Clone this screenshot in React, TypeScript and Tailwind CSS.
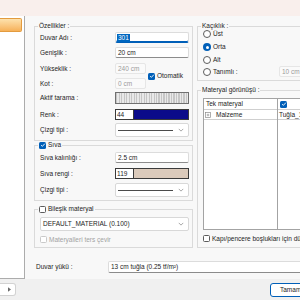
import React from 'react';

type BoxProps = { children?: React.ReactNode; className?: string };

const Check = ({ checked = false, disabled = false }: { checked?: boolean; disabled?: boolean }) =>
  checked ? (
    <span className="flex h-[7px] w-[7px] shrink-0 items-center justify-center rounded-[1.5px] bg-[#005fb8]">
      <svg viewBox="0 0 8 8" className="h-[6px] w-[6px]" fill="none" stroke="white" strokeWidth={1.2}>
        <path d="M1.5 4.2 3.2 5.8 6.5 2.2" />
      </svg>
    </span>
  ) : (
    <span
      className={`h-[7px] w-[7px] shrink-0 rounded-[1.5px] border bg-white ${
        disabled ? 'border-[#c9c9c9]' : 'border-[#5c5c5c]'
      }`}
    />
  );

const Radio = ({ checked = false }: { checked?: boolean }) =>
  checked ? (
    <span className="flex h-[8px] w-[8px] shrink-0 items-center justify-center rounded-full bg-[#005fb8]">
      <span className="h-[3px] w-[3px] rounded-full bg-white" />
    </span>
  ) : (
    <span className="h-[8px] w-[8px] shrink-0 rounded-full border border-[#5c5c5c] bg-white" />
  );

const Chevron = () => (
  <svg viewBox="0 0 8 5" className="h-[4px] w-[6px]" fill="none" stroke="#8a8a8a" strokeWidth={1}>
    <path d="M1 1l3 3 3-3" />
  </svg>
);

const TextBox = ({
  children,
  className = '',
  disabled = false,
  focused = false,
}: BoxProps & { disabled?: boolean; focused?: boolean }) => (
  <div
    className={`flex h-[11px] items-center overflow-hidden whitespace-nowrap rounded-[2px] border px-[2px] ${
      disabled
        ? 'border-[#e6e6e6] bg-[#fafafa] text-[#9b9b9b]'
        : focused
          ? 'border-[#dcdcdc] border-b-[#005fb8] bg-white shadow-[inset_0_-1px_0_#005fb8]'
          : 'border-[#dcdcdc] border-b-[#8c8c8c] bg-white'
    } ${className}`}
  >
    {children}
  </div>
);

const LineCombo = () => (
  <div className="flex h-[14px] flex-1 items-center rounded-[2px] border border-[#d8d8d8] bg-white pl-[2px] pr-[4px]">
    <span className="h-px w-[55px] bg-[#4a4a4a]" />
    <span className="ml-auto">
      <Chevron />
    </span>
  </div>
);

const ColorBox = ({ value, color }: { value: string; color: string }) => (
  <div className="flex h-[11px] flex-1 border border-[#3a3a3a] bg-white">
    <span className="flex w-[18px] items-center border-r border-[#3a3a3a] pl-[1px]">{value}</span>
    <span className="flex-1" style={{ background: color }} />
  </div>
);

const Row = ({ label, children, className = '' }: BoxProps & { label: string }) => (
  <div className={`flex items-center ${className}`}>
    <span className="w-[75px] shrink-0 whitespace-nowrap">{label}</span>
    {children}
  </div>
);

const PlusBox = () => (
  <svg viewBox="0 0 7 7" className="h-[6px] w-[6px]" fill="none" stroke="#8a8a8a" strokeWidth={0.8}>
    <rect x="0.5" y="0.5" width="6" height="6" />
    <path d="M2 3.5h3M3.5 2v3" />
  </svg>
);

export default function App() {
  return (
    <div className="flex h-[300px] w-[300px] flex-col overflow-hidden bg-[#f0f0f0] text-[6.5px] leading-[8px] text-[#1c1c1c] [font-family:'Liberation_Sans',Arial,sans-serif]">
      <div className="h-[16px] shrink-0 bg-[#f9efec]" />

      <div className="flex h-[263px] shrink-0">
        <aside className="w-[25px] shrink-0 border-b border-r border-[#acacac] bg-white pt-[2px]">
          <div className="h-[14px] w-[22px] rounded-r-[2px] border border-l-0 border-[#e39b3e] bg-linear-to-b from-[#fde2ad] to-[#f6b158]" />
        </aside>

        <main className="flex min-w-0 flex-1 flex-col overflow-hidden bg-[#f8f8f8] pl-[9px]">
          <div className="mt-[6px] flex gap-[4px]">
            {/* left column */}
            <div className="flex w-[159px] shrink-0 flex-col">
              <fieldset className="border border-[#dadada] pb-[3px] pl-[5px] pr-[3px] pt-[2px]">
                <legend className="ml-[-2px] px-[1px]">Özellikler :</legend>
                <Row label="Duvar Adı :">
                  <TextBox focused className="flex-1 pl-[1px]">
                    <span className="bg-[#0067c0] px-[1px] text-white">301</span>
                  </TextBox>
                </Row>
                <Row label="Genişlik :" className="mt-[4px]">
                  <TextBox className="flex-1">20 cm</TextBox>
                </Row>
                <div className="mt-[5px] flex items-center">
                  <div className="flex flex-col gap-[4px]">
                    <Row label="Yükseklik :">
                      <TextBox disabled className="w-[31px]">240 cm</TextBox>
                    </Row>
                    <Row label="Kot :">
                      <TextBox disabled className="w-[31px]">0 cm</TextBox>
                    </Row>
                  </div>
                  <span className="ml-[2px]">
                    <Check checked />
                  </span>
                  <span className="ml-[2px]">Otomatik</span>
                </div>
                <Row label="Aktif tarama :" className="mt-[3px]">
                  <div className="h-[12px] flex-1 border-[1.5px] border-[#707070] bg-[repeating-linear-gradient(90deg,#c6c6c6_0,#c6c6c6_1px,#e9e9e9_1px,#e9e9e9_2.5px)]" />
                </Row>
                <Row label="Renk :" className="mt-[5px]">
                  <ColorBox value="44" color="#0b0b8a" />
                </Row>
                <Row label="Çizgi tipi :" className="mt-[3px]">
                  <LineCombo />
                </Row>
              </fieldset>

              <fieldset className="border border-[#dadada] pb-[3px] pl-[5px] pr-[3px] pt-[3px]">
                <legend className="ml-[-2px] flex items-center px-[1px]">
                  <Check checked />
                  <span className="ml-[2px]">Sıva</span>
                </legend>
                <Row label="Sıva kalınlığı :">
                  <TextBox className="flex-1">2.5 cm</TextBox>
                </Row>
                <Row label="Sıva rengi :" className="mt-[5px]">
                  <ColorBox value="119" color="#dbcabb" />
                </Row>
                <Row label="Çizgi tipi :" className="mt-[4px]">
                  <LineCombo />
                </Row>
              </fieldset>

              <fieldset className="mt-[4px] border border-[#dadada] pb-[4px] pl-[5px] pr-[3px] pt-[4px]">
                <legend className="ml-[-2px] flex items-center px-[1px]">
                  <Check />
                  <span className="ml-[2px]">Bileşik materyal</span>
                </legend>
                <div className="flex h-[14px] items-center rounded-[2px] border border-[#d8d8d8] bg-white pl-[2px] pr-[4px]">
                  <span>DEFAULT_MATERIAL (0.100)</span>
                  <span className="ml-auto">
                    <Chevron />
                  </span>
                </div>
                <div className="mt-[5px] flex h-[7px] items-center">
                  <Check disabled />
                  <span className="ml-[2px] text-[#a2a2a2]">Materyalleri ters çevir</span>
                </div>
              </fieldset>
            </div>

            {/* right column */}
            <div className="flex w-[120px] shrink-0 flex-col">
              <fieldset className="border border-[#dadada] pb-[3px] pl-[5px]">
                <legend className="ml-[-2px] px-[1px]">Kaçıklık :</legend>
                <div className="flex h-[8px] items-center">
                  <Radio />
                  <span className="ml-[2px]">Üst</span>
                </div>
                <div className="mt-[5px] flex h-[8px] items-center">
                  <Radio checked />
                  <span className="ml-[2px]">Orta</span>
                </div>
                <div className="mt-[5px] flex h-[8px] items-center">
                  <Radio />
                  <span className="ml-[2px]">Alt</span>
                </div>
                <div className="mt-[2px] flex h-[11px] items-center">
                  <Radio />
                  <span className="ml-[2px] w-[66px]">Tanımlı :</span>
                  <TextBox disabled className="w-[40px]">10 cm</TextBox>
                </div>
              </fieldset>

              <fieldset className="mt-[5px] border border-[#dadada] pb-[5px] pl-[5px] pt-[4px]">
                <legend className="ml-[-2px] px-[1px]">Materyal görünüşü :</legend>
                <div className="flex h-[132px] border border-[#a3a3a3] bg-white">
                  <div className="w-[74px] shrink-0 border-r border-[#a3a3a3]">
                    <div className="flex h-[11px] items-center border-b border-[#cfcfcf] pl-[2px]">Tek materyal</div>
                    <div className="flex h-[10px] items-center border-b border-[#cfcfcf] pl-[1px]">
                      <PlusBox />
                      <span className="ml-[5px]">Malzeme</span>
                    </div>
                  </div>
                  <div className="min-w-0 flex-1">
                    <div className="flex h-[11px] items-center border-b border-[#cfcfcf] pl-[2px]">
                      <Check checked />
                    </div>
                    <div className="flex h-[10px] items-center whitespace-nowrap border-b border-[#cfcfcf] pl-[1px]">
                      Tuğla_13
                    </div>
                  </div>
                </div>
                <div className="mt-[5px] flex h-[7px] items-center whitespace-nowrap">
                  <Check />
                  <span className="ml-[2px]">Kapı/pencere boşlukları için düğüm noktası</span>
                </div>
              </fieldset>
            </div>
          </div>

          <div className="mt-[13px] flex h-[12px] items-center">
            <span className="ml-[2px] w-[72px] shrink-0">Duvar yükü :</span>
            <div className="flex h-[12px] w-[200px] shrink-0 items-center whitespace-nowrap rounded-[2px] border border-[#dcdcdc] border-b-[#8c8c8c] bg-white pl-[2px]">
              13 cm tuğla (0.25 tf/m²)
            </div>
          </div>
        </main>
      </div>

      <footer className="flex h-[21px] shrink-0 items-start">
        <div className="mt-[4px] flex h-[13px] w-[16px] items-center justify-end rounded-r-[3px] border border-l-0 border-[#d2d2d2] bg-white pr-[4px]">
          <svg viewBox="0 0 4 6" className="h-[5px] w-[3px]" fill="#6a6a6a">
            <path d="M0 0l4 3-4 3z" />
          </svg>
        </div>
        <button className="ml-auto mr-[-20px] mt-[4px] flex h-[14px] w-[50px] items-center rounded-[3px] border border-[#005fb8] bg-white pl-[9px] text-[#1c1c1c]">
          Tamam
        </button>
      </footer>
    </div>
  );
}
